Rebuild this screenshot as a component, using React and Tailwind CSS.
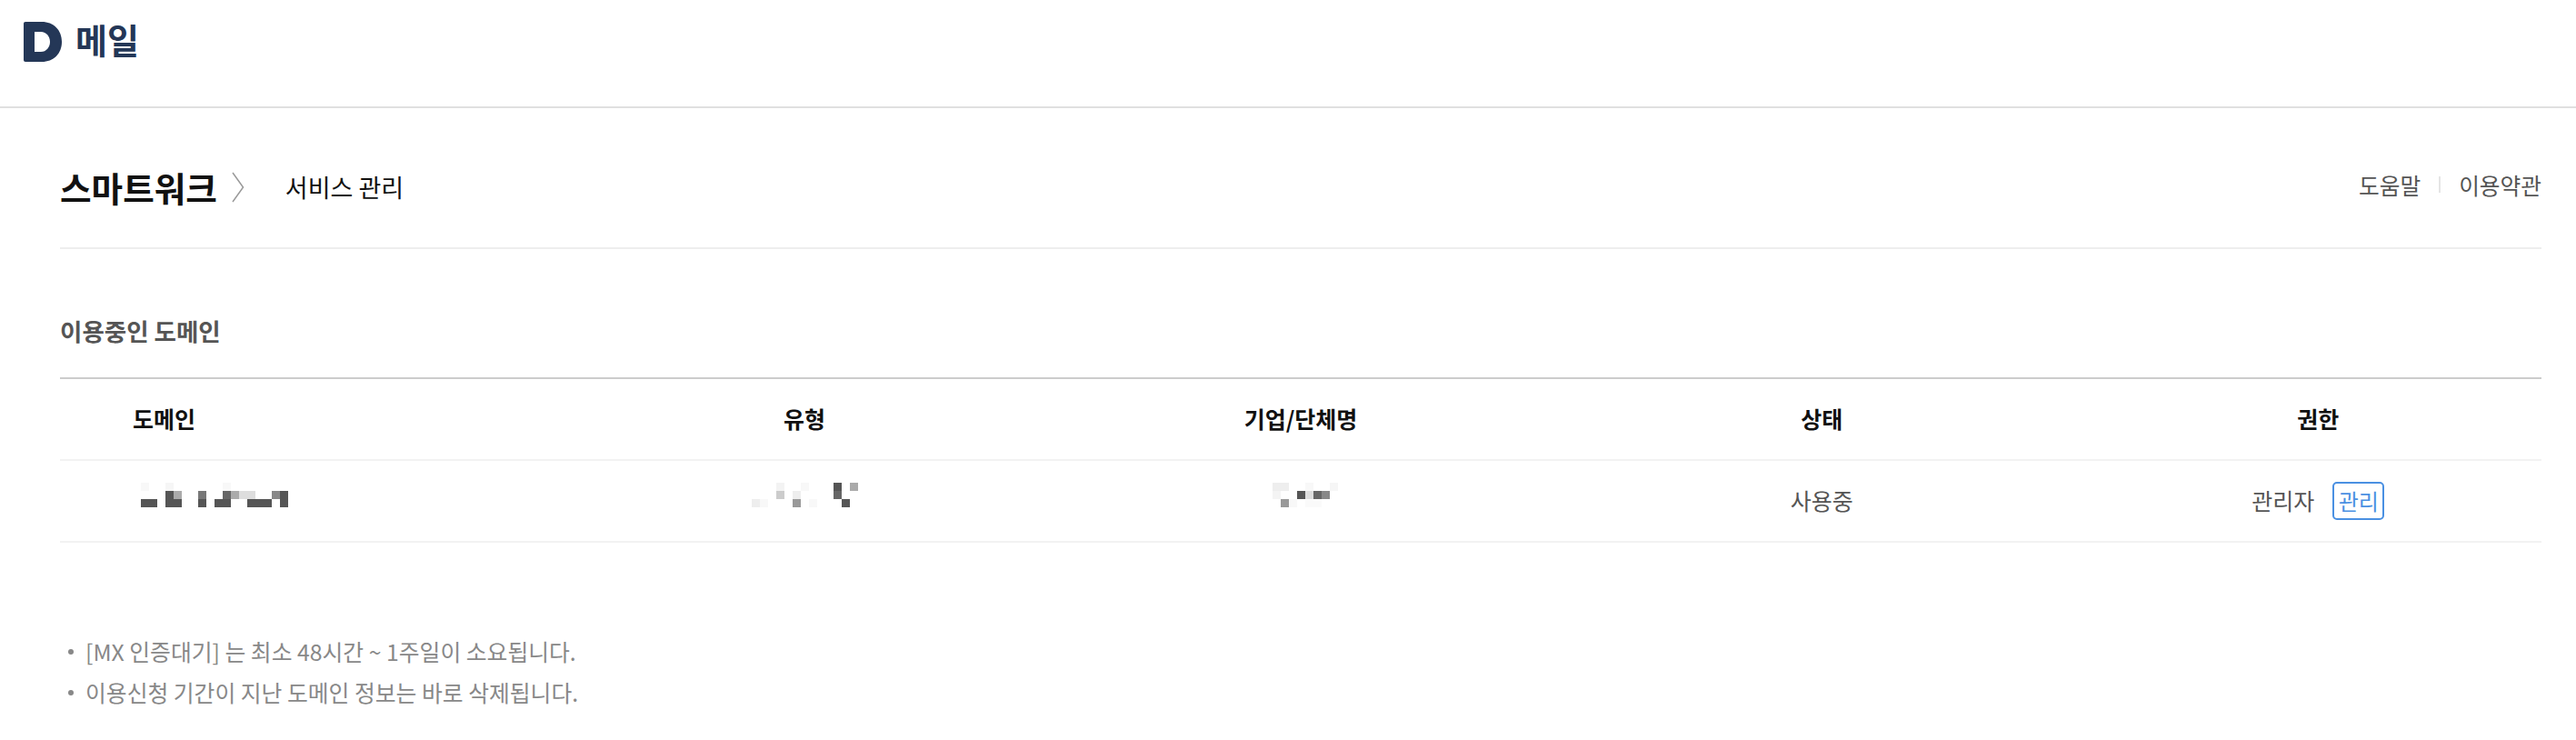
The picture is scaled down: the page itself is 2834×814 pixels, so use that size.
const domainCells = [
  [0, 0, "#f8f8f8"], [3, 0, "#f6f6f6"], [10, 0, "#f8f8f8"],
  [3, 1, "#555"], [4, 1, "#aaa"], [7, 1, "#777"], [10, 1, "#666"], [11, 1, "#aaa"], [12, 1, "#ddd"], [13, 1, "#ddd"], [16, 1, "#888"], [17, 1, "#555"],
  [0, 2, "#555"], [1, 2, "#555"], [3, 2, "#555"], [4, 2, "#555"], [7, 2, "#555"], [9, 2, "#555"], [10, 2, "#555"], [13, 2, "#555"], [14, 2, "#555"], [15, 2, "#555"], [17, 2, "#555"],
];

const typeCells = [
  [3, 0, "#f3f3f3"], [6, 0, "#f8f8f8"], [10, 0, "#555"], [12, 0, "#aaa"],
  [3, 1, "#ccc"], [5, 1, "#eee"], [10, 1, "#666"],
  [0, 2, "#eee"], [1, 2, "#f8f8f8"], [5, 2, "#999"], [7, 2, "#f8f8f8"], [11, 2, "#555"],
];

const companyCells = [
  [0, 0, "#eee"], [1, 0, "#eee"], [4, 0, "#f8f8f8"], [7, 0, "#f6f6f6"],
  [0, 1, "#f4f4f4"], [3, 1, "#555"], [4, 1, "#ddd"], [5, 1, "#666"], [6, 1, "#888"],
  [1, 2, "#999"], [2, 2, "#f8f8f8"], [4, 2, "#fafafa"], [5, 2, "#fafafa"],
];

function Mosaic({ cells, cols, className }) {
  return (
    <svg width={cols * 9} height={27} viewBox={`0 0 ${cols * 9} 27`} shapeRendering="crispEdges" className={className}>
      {cells.map(([x, y, fill], i) => (
        <rect key={i} x={x * 9} y={y * 9} width="9" height="9" fill={fill} />
      ))}
    </svg>
  );
}

function Logo() {
  return (
    <svg width="42" height="44" viewBox="0 0 42 44" className="shrink-0">
      <path
        fillRule="evenodd"
        fill="#243757"
        d="M2 0H20C33 0 42 9 42 22C42 35 33 44 20 44H2C.8 44 0 43.2 0 42V2C0 .8.8 0 2 0ZM12 11V33H19C25 33 29 28 29 22C29 16 25 11 19 11Z"
      />
    </svg>
  );
}

export default function App() {
  return (
    <div className="min-h-screen bg-white font-['Noto_Sans_CJK_KR','Liberation_Sans',sans-serif] text-[#111]">
      <header className="h-[119px] border-b-2 border-[#e0e0e0] pl-[26px] pt-[24px]">
        <div className="flex items-start gap-[15px]">
          <Logo />
          <span className="text-[38px] leading-[38px] font-bold text-[#243757]">메일</span>
        </div>
      </header>

      <main className="pl-[66px] pr-[38px]">
        <div className="flex h-[155px] items-center justify-between border-b-2 border-[#eeeeee] pt-[20px]">
          <div className="flex items-center">
            <h1 className="text-[37.6px] leading-[48px] font-bold">스마트워크</h1>
            <svg width="14" height="34" viewBox="0 0 14 34" fill="none" stroke="#999" strokeWidth="1.5" className="ml-[16px]">
              <path d="M1 1L12.5 17L1 33" />
            </svg>
            <span className="ml-[45px] text-[27px] leading-[40px]">서비스 관리</span>
          </div>
          <div className="mb-[5px] flex items-center text-[24.7px] leading-[36px] text-[#555]">
            <a>도움말</a>
            <span className="mx-[20px] h-[18px] w-[2px] bg-[#e5e5e5]" />
            <a>이용약관</a>
          </div>
        </div>

        <h2 className="mt-[71px] text-[26.5px] leading-[38px] font-bold text-[#555]">이용중인 도메인</h2>

        <table className="mt-[32px] w-full table-fixed border-t-2 border-[#cccccc] text-[25px]">
          <colgroup>
            <col className="w-[20%]" />
            <col className="w-[20%]" />
            <col className="w-[20%]" />
            <col className="w-[22%]" />
            <col className="w-[18%]" />
          </colgroup>
          <thead>
            <tr className="h-[90px] border-b-2 border-[#f2f2f2] font-bold">
              <th className="pl-[80px] text-left font-bold">도메인</th>
              <th className="font-bold">유형</th>
              <th className="font-bold">기업/단체명</th>
              <th className="font-bold">상태</th>
              <th className="font-bold">권한</th>
            </tr>
          </thead>
          <tbody>
            <tr className="h-[90px] border-b-2 border-[#f2f2f2] text-[#555]">
              <td className="pl-[89px]">
                <Mosaic cells={domainCells} cols={18} className="mb-[13px] block" />
              </td>
              <td>
                <Mosaic cells={typeCells} cols={13} className="mx-auto mb-[13px] block" />
              </td>
              <td>
                <Mosaic cells={companyCells} cols={8} className="mb-[13px] ml-[242px] block" />
              </td>
              <td className="text-center">사용중</td>
              <td>
                <div className="flex items-center justify-center gap-[20px]">
                  <span>관리자</span>
                  <button className="flex h-[42px] w-[57px] items-center justify-center rounded-[5px] border-2 border-[#4a90e2] text-[24px] text-[#4a90e2]">
                    관리
                  </button>
                </div>
              </td>
            </tr>
          </tbody>
        </table>

        <ul className="mt-[97px] text-[24.8px] leading-[45px] text-[#888]">
          <li className="flex items-center">
            <span className="ml-[9px] mr-[13px] h-[6px] w-[6px] rounded-full bg-[#888]" />
            [MX 인증대기] 는 최소 48시간 ~ 1주일이 소요됩니다.
          </li>
          <li className="flex items-center">
            <span className="ml-[9px] mr-[13px] h-[6px] w-[6px] rounded-full bg-[#888]" />
            이용신청 기간이 지난 도메인 정보는 바로 삭제됩니다.
          </li>
        </ul>
      </main>
    </div>
  );
}
